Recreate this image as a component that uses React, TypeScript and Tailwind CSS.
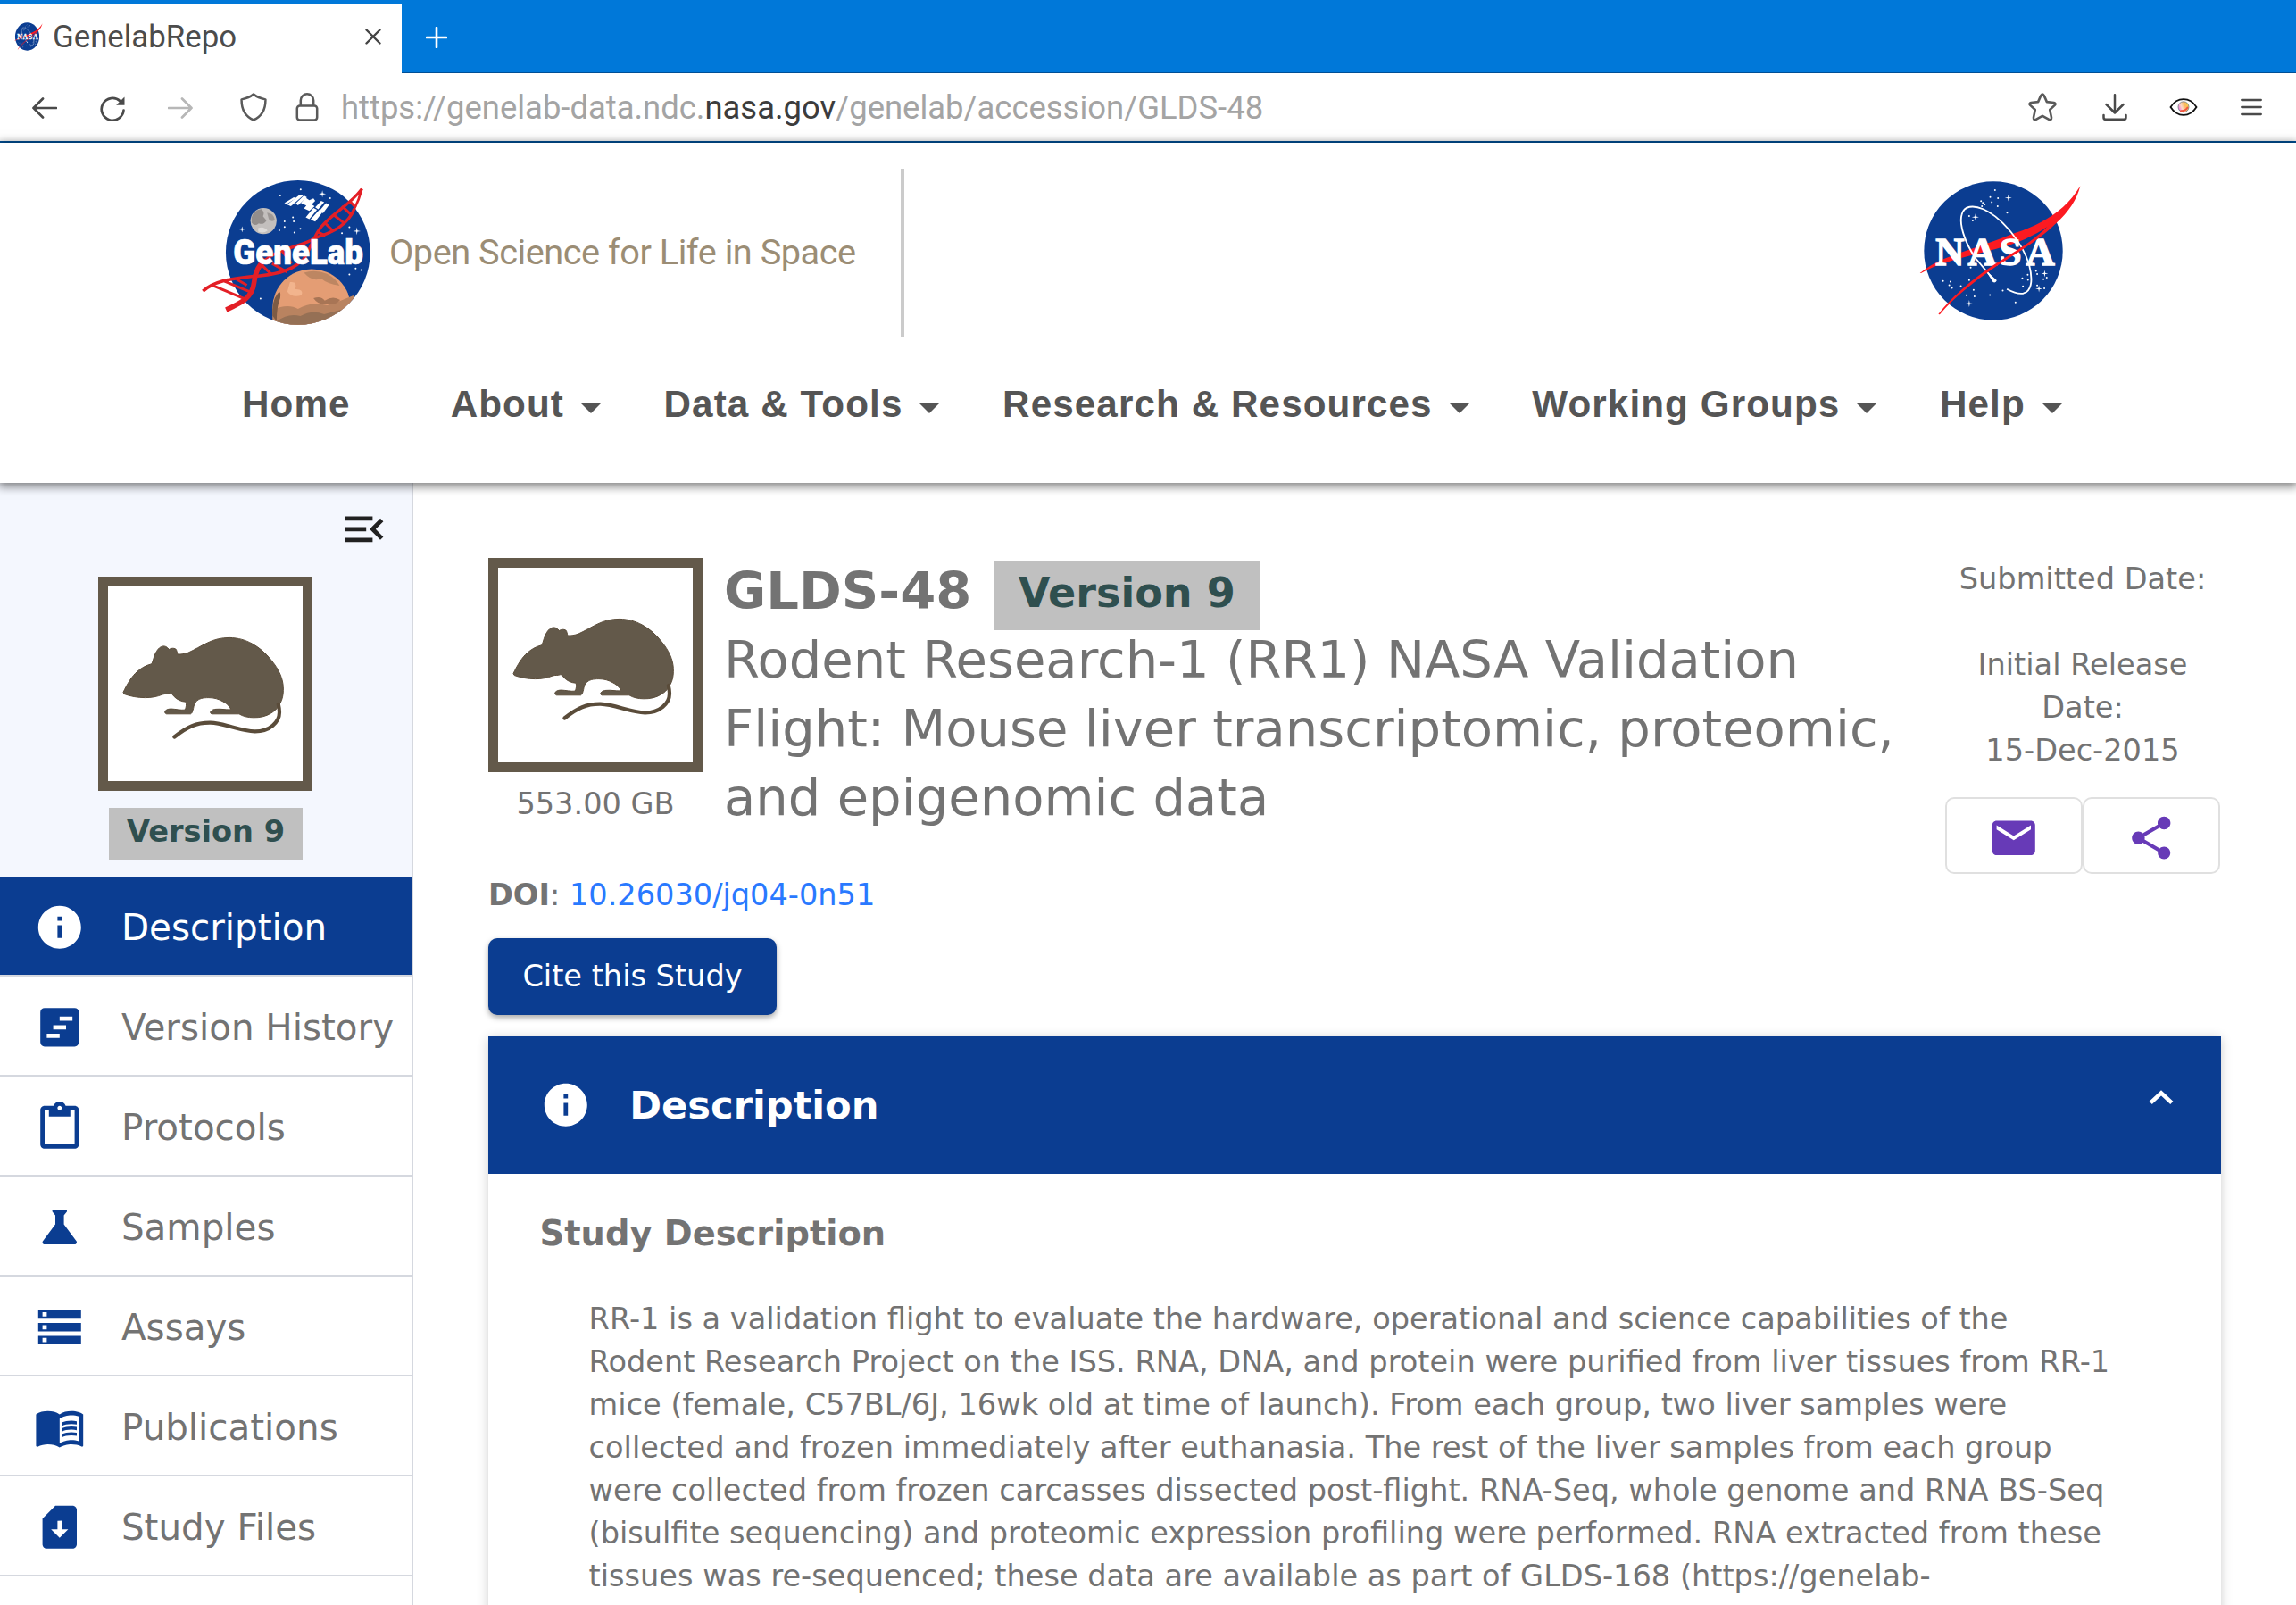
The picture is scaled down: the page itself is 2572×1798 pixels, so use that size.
import React from "react";
import {
  MdInfo,
  MdContentPaste,
  MdScience,
  MdStorage,
  MdMenuBook,
  MdSimCardDownload,
  MdEmail,
  MdShare,
  MdMenuOpen,
} from "react-icons/md";

function Star({ x, y, r = 12 }: { x: number; y: number; r?: number }) {
  return (
    <path
      d={`M${x - r} ${y}L${x - 2} ${y - 2}L${x} ${y - r}L${x + 2} ${y - 2}L${x + r} ${y}L${x + 2} ${y + 2}L${x} ${y + r}L${x - 2} ${y + 2}Z`}
      fill="#fff"
    />
  );
}

const nasaDots = [
  [405, 458], [389, 481], [415, 485], [394, 499], [414, 512], [446, 534], [358, 495], [364, 501], [370, 506], [361, 512],
  [318, 545], [330, 560], [323, 719], [230, 764], [255, 766], [251, 778], [260, 787], [290, 781], [318, 761], [333, 794],
  [309, 812], [336, 816], [388, 811], [431, 796], [474, 836], [497, 755], [515, 743], [516, 760], [499, 782], [543, 730],
  [547, 741], [568, 758], [579, 753], [547, 779], [571, 789],
];

function NasaLogo({ className }: { className: string }) {
  return (
    <svg viewBox="150 425 550 475" preserveAspectRatio="none" className={className}>
      <circle cx="399.5" cy="662.5" r="233.5" fill="#0b3d91" />
      {nasaDots.map(([x, y]) => (
        <circle key={`${x}-${y}`} cx={x} cy={y} r="3" fill="#fff" />
      ))}
      <Star x={450} y={484} />
      <Star x={339} y={549} />
      <Star x={318} y={840} />
      <Star x={572} y={739} />
      <Star x={553} y={790} />
      <path
        d="M692 444C642 528 562 574 465 605C400 632 305 662 235 689Q190 707 152 738L156 738Q195 714 240 702C330 674 430 654 485 632C520 617 550 602 575 585L610 570C655 530 680 490 692 444Z"
        fill="#fc1a21"
      />
      <path
        d="M405 765L340 688C300 630 284 570 293 540C301 510 332 508 365 522C430 550 500 640 520 710C535 768 525 800 500 806C483 809 465 802 445 791"
        fill="none"
        stroke="#fff"
        strokeWidth="5.5"
      />
      <path d="M374 729L398 768Q408 772 411 762Z" fill="#fff" />
      <text
        x="205 314 420 509"
        y="711"
        fontFamily="'Liberation Serif', serif"
        fontWeight="700"
        fontSize="134"
        fill="#fff"
        stroke="#fff"
        strokeWidth="4.5"
      >
        NASA
      </text>
      <path
        d="M584 578C545 618 500 648 440 685C350 738 260 815 214 876L219 877C270 815 360 745 445 692C520 645 575 606 612 568Z"
        fill="#fc1a21"
      />
    </svg>
  );
}

const genelabDots = [
  [312, 116], [381, 96], [480, 125], [327, 203], [355, 190], [358, 203], [327, 222], [309, 233], [380, 228], [360, 241],
  [520, 243], [545, 223], [246, 463], [545, 382], [566, 362], [585, 367],
];

function GeneLabLogo() {
  return (
    <svg viewBox="45 60 580 500" className="mt-[11px] h-[167px] w-[193px] shrink-0 overflow-visible">
      <defs>
        <clipPath id="globe">
          <circle cx="372" cy="308" r="243" />
        </clipPath>
      </defs>
      <circle cx="372" cy="308" r="243" fill="#0b3d91" />
      {genelabDots.map(([x, y]) => (
        <circle key={`${x}-${y}`} cx={x} cy={y} r="3" fill="#fff" />
      ))}
      <Star x={454} y={111} />
      <Star x={184} y={230} r={10} />
      <Star x={570} y={236} r={13} />
      <circle cx="256" cy="202" r="44" fill="#c3bfbd" />
      <path d="M216 190Q222 166 248 162Q262 172 254 186L266 200Q256 216 240 210Q226 222 216 208Z" fill="#938e8c" />
      <path d="M268 174Q290 176 294 198Q284 208 274 196Z" fill="#9d9896" />
      <path d="M238 226Q256 218 270 234Q256 246 238 238Z" fill="#dedbd9" />
      {/* space station: two pairs of solar arrays joined by the truss */}
      <g fill="#fff">
        <path d="M326 142L358 122L366 125L334 145Z" />
        <path d="M336 147L378 113L389 117L348 152Z" />
        <path d="M364 143L392 116L402 122L372 149Z" />
        <path d="M382 142L398 124L410 132L424 126L430 134L418 146L428 152L410 168L392 160L400 150Z" />
        <path d="M398 190L424 158L436 164L410 196Z" />
        <path d="M414 197L444 164L456 170L430 204Z" />
        <path d="M430 156L450 134L460 139L440 163Z" />
        <path d="M446 166L466 142L477 148L456 176Z" />
      </g>
      <g clipPath="url(#globe)">
        <circle cx="418" cy="496" r="132" fill="#e49d74" />
        <path d="M286 500Q340 478 372 498Q420 470 470 486Q520 470 560 452V560H286Z" fill="#b98360" />
        <path d="M300 540Q340 510 380 522Q420 500 460 516L520 500V560H290Z" fill="#957055" />
        <path d="M392 376Q430 364 470 380Q500 396 512 420Q470 414 450 396Q420 408 392 376Z" fill="#bd8662" />
        <path d="M345 408Q372 404 362 432Q392 430 384 452Q352 462 336 440Z" fill="#f2b48d" />
        <path d="M424 462Q450 452 462 470Q490 452 514 468Q500 486 470 482Q440 486 424 462Z" fill="#a87555" />
        <path d="M302 448Q316 430 312 462Q300 490 300 540L286 520Q284 470 302 448Z" fill="#7d5b44" />
      </g>
      <g fill="none" stroke="#e31f26">
        <path d="M52 438C90 405 140 397 215 389C290 384 345 372 380 340" strokeWidth="11" />
        <path d="M130 501C180 478 218 462 224 410C228 370 242 348 262 332" strokeWidth="17" />
        <path d="M250 345C300 290 390 290 432 258C490 240 540 215 562 160" strokeWidth="10" />
        <path d="M380 345C412 310 418 262 450 222C492 172 545 150 587 94" strokeWidth="10" />
        <path d="M587 94Q578 130 560 165" strokeWidth="8" />
        <path
          d="M82 418L190 463M125 405L212 441M165 398L200 418M250 350L285 384M285 345L335 374M320 305L350 345M440 240L464 252M462 208L492 238M490 180L526 208M520 152L552 182M545 134L566 156"
          strokeWidth="9"
        />
      </g>
      <text
        x="154"
        y="349"
        fontFamily="Roboto, sans-serif"
        fontWeight="900"
        fontSize="119"
        textLength="438"
        lengthAdjust="spacingAndGlyphs"
        fill="#fff"
        stroke="#fff"
        strokeWidth="2"
      >
        GeneLab
      </text>
    </svg>
  );
}

function Mouse() {
  return (
    <svg viewBox="0 0 240 240" className="size-[240px] shrink-0">
      <rect x="5.5" y="5.5" width="229" height="229" fill="#fff" stroke="#63594a" strokeWidth="11" />
      <path
        d="M28 129.7C32 121 38 111 43.6 106.5C48 102.5 53 99.5 60 97.7C62 93 62.5 88 65.5 83.5C69 77.5 75 75.5 79.3 81.5C82 80 84.5 79.8 86.8 81C88.2 82.5 88.2 84.5 88.9 87C93 87.2 97 86.5 100.7 85.2C108 82 115 77.5 122.5 74C130 70.3 138 68.4 147 68.4C157 68.6 165 71 172.5 75.1C181 79.8 188 86 193.6 93.2C200 101 204 108 206 115.5C207.5 121 207.6 126 207.1 131.3C206.6 136 205 140.5 202.5 144.3C200 148.5 197 151 193.6 153C188 156.5 181 158 173.9 157.8C168 157.8 162 156.5 157.9 153.8L127.1 153.8C125.5 153 125.2 152 126.2 150.8C127.5 149.2 129.5 148.5 132 148.4C138 147.8 142 149.2 147.9 148.9C149.5 147.5 144 142 140 140C135 137 129.5 135.6 123.9 135.6C117 135.6 113 136.5 109.6 140C106.5 143.5 107.2 147 106 149.8C105.5 152 105 153 103.5 153.8L76.5 153.8C74.5 153 74.2 151.5 75.2 150.3C77 148.5 79 148.1 82 148.1C87 148.3 92 149.7 97 149.2C98.8 147 98.8 142.5 98.2 140.2C93 140 88 137.5 85.2 134.5C83 132 82 130.5 80.4 130.8C77.5 132 75 131 72.1 132C66 134.5 60 135.6 52.5 135.6C44 135.6 36 134 29.3 131.6Z"
        fill="#63594a"
        stroke="#5a4c3a"
        strokeWidth="1"
      />
      <path
        d="M85.4 179.5C100 168 110 163.5 125.7 163.7C142 164.2 158 172.5 175.7 173.4C192 173.4 203 163 203 152Q203 148 201.8 143"
        fill="none"
        stroke="#5a4c3a"
        strokeWidth="4.2"
        strokeLinecap="round"
      />
    </svg>
  );
}

function VersionHistoryIcon({ className }: { className?: string }) {
  return (
    <svg viewBox="0 0 24 24" className={className} fill="currentColor">
      <path
        fillRule="evenodd"
        d="M5 3h14a2 2 0 0 1 2 2v14a2 2 0 0 1-2 2H5a2 2 0 0 1-2-2V5a2 2 0 0 1 2-2zM12 7h6v2h-6zM9 11h6v2H9zM6 15h6v2H6z"
      />
    </svg>
  );
}

function TabStrip() {
  return (
    <div className="flex h-[82px] border-b border-[#004f96] bg-[#0078d9]">
      <div className="mt-1 -mb-px flex w-[450px] items-center bg-white pb-1">
        <NasaLogo className="ml-4 size-8" />
        <span className="ml-[11px] text-[34.8px] leading-none text-[#4c4c4c]">GenelabRepo</span>
        <svg viewBox="0 0 18 18" className="mr-[23px] ml-auto size-[18px]" stroke="#444" strokeWidth="2.4" strokeLinecap="round">
          <path d="M1.5 1.5l15 15M16.5 1.5l-15 15" />
        </svg>
      </div>
      <svg viewBox="0 0 24 24" className="mt-[30px] ml-[27px] size-6" stroke="#fff" strokeWidth="2.6" strokeLinecap="round">
        <path d="M12 1v22M1 12h22" />
      </svg>
    </div>
  );
}

function Toolbar() {
  return (
    <div className="flex h-[78px] items-center border-b-2 border-[#00529a] bg-white pr-[38px] pl-9 text-[#4a4a4a]">
      <svg viewBox="0 0 28 24" className="mt-px h-6 w-7" fill="none" stroke="currentColor" strokeWidth="2.7" strokeLinecap="round" strokeLinejoin="round">
        <path d="M12 1.5L1.5 12L12 22.5M1.5 12H27" />
      </svg>
      <svg viewBox="0 0 28 28" className="mt-[3px] ml-12 size-7" fill="none" stroke="currentColor" strokeWidth="2.7" strokeLinecap="round">
        <path d="M26.5 15.5A12.4 12.4 0 1 1 22.5 5.2" />
        <path d="M27.5 .5V9.8H18.2Z" fill="currentColor" stroke="none" />
      </svg>
      <svg viewBox="0 0 28 24" className="mt-px ml-12 h-6 w-7 text-[#b7b7b7]" fill="none" stroke="currentColor" strokeWidth="2.7" strokeLinecap="round" strokeLinejoin="round">
        <path d="M16 1.5L26.5 12L16 22.5M26.5 12H1" />
      </svg>
      <svg viewBox="0 0 30 32" className="ml-[53px] h-8 w-[30px]" fill="none" stroke="#5a5a5a" strokeWidth="2.5" strokeLinejoin="round">
        <path d="M15 1.5C11 5 6 6.5 1.6 7.4C1.4 17 5 26 15 30.5C25 26 28.6 17 28.4 7.4C24 6.5 19 5 15 1.5Z" />
      </svg>
      <svg viewBox="0 0 26 32" className="ml-8 h-8 w-[26px]" fill="none" stroke="#5a5a5a" strokeWidth="2.5">
        <rect x="1.8" y="14.5" width="22.4" height="16" rx="3" />
        <path d="M5.8 14.5V8.5a7.2 7.2 0 0 1 14.4 0V14.5" />
      </svg>
      <span className="mt-[2px] ml-[25px] text-[36.43px] leading-none whitespace-nowrap text-[#a4a4a4]">
        https://genelab-data.ndc.<span className="text-[#3c3c3c]">nasa.gov</span>/genelab/accession/GLDS-48
      </span>
      <svg viewBox="0 0 32 32" className="ml-auto size-8" fill="none" stroke="#5a5a5a" strokeWidth="2.6" strokeLinejoin="round">
        <path d="M14.3 2.9Q16 .4 17.7 2.9L20.9 10.1L28.8 11Q31.6 11.8 29.7 13.9L24.2 19L26 27.6Q26.2 31 23.3 29.9L16 25.8L8.7 29.9Q5.8 31 6 27.6L7.8 19L2.3 13.9Q.4 11.8 3.2 11L11.1 10.1Z" />
      </svg>
      <svg viewBox="0 0 28 30" className="ml-[51px] h-[30px] w-7" fill="none" stroke="currentColor" strokeWidth="2.5" strokeLinecap="round" strokeLinejoin="round">
        <path d="M14 1.2V21M4.5 12L14 21.5L23.5 12M1.5 24v2.5q0 2.3 2.3 2.3h20.4q2.3 0 2.3-2.3V24" />
      </svg>
      <svg viewBox="0 0 32 20" className="ml-[47px] h-5 w-8" fill="none">
        <defs>
          <linearGradient id="iris" x1="0" y1=".7" x2="1" y2=".3">
            <stop offset="0" stopColor="#f06be0" />
            <stop offset=".35" stopColor="#fbd9c4" />
            <stop offset=".65" stopColor="#fbb765" />
            <stop offset="1" stopColor="#f9d23c" />
          </linearGradient>
        </defs>
        <path d="M1.5 10C9 -1.8 23 -1.8 30.5 10C23 21.8 9 21.8 1.5 10Z" stroke="#111" strokeWidth="1.8" />
        <circle cx="16" cy="9.8" r="6" fill="url(#iris)" stroke="#6f7a80" strokeWidth=".8" />
        <path d="M13 14.2Q18 14.5 20.5 10.5" stroke="#f0553f" strokeWidth="2" strokeLinecap="round" />
      </svg>
      <svg viewBox="0 0 24 20" className="ml-[48px] h-5 w-6" stroke="currentColor" strokeWidth="2.3" strokeLinecap="round">
        <path d="M1.2 2h21.6M1.2 10h21.6M1.2 18h21.6" />
      </svg>
    </div>
  );
}

const menus = ["About", "Data & Tools", "Research & Resources", "Working Groups", "Help"];

function SiteHeader() {
  return (
    <header className="relative h-[381px] shrink-0 bg-white pt-[29px] shadow-[0_2px_10px_2px_rgba(0,0,0,0.5)]">
      <div className="flex h-[188px] items-start pr-[239px] pl-[225px]">
        <GeneLabLogo />
        <span className="mt-[69px] ml-[18px] text-[39.7px] leading-[50px] tracking-[-0.47px] whitespace-nowrap text-[#9b8d75]">
          Open Science for Life in Space
        </span>
        <div className="ml-[50px] h-[188px] w-1 bg-[#cbcbcb]" />
        <NasaLogo className="mt-[13px] ml-auto h-[158px] w-[183px]" />
      </div>
      <nav className="mt-[50px] flex items-center pl-[271px] font-['Liberation_Sans',sans-serif] text-[42.2px] leading-[52px] font-bold tracking-[1.1px] whitespace-nowrap text-[#555]">
        <a className="mr-[112px]">Home</a>
        {menus.map((m) => (
          <a key={m} className="mr-[69.6px] flex items-center">
            {m}
            <svg viewBox="0 0 24 12" className="mt-2 ml-[18px] h-3 w-6" fill="currentColor">
              <path d="M0 0H24L12 12Z" />
            </svg>
          </a>
        ))}
      </nav>
    </header>
  );
}

const navRows = [
  { label: "Description", Icon: MdInfo, active: true },
  { label: "Version History", Icon: VersionHistoryIcon },
  { label: "Protocols", Icon: MdContentPaste },
  { label: "Samples", Icon: MdScience },
  { label: "Assays", Icon: MdStorage },
  { label: "Publications", Icon: MdMenuBook },
  { label: "Study Files", Icon: MdSimCardDownload },
];

function Sidebar() {
  return (
    <aside className="flex w-[463px] shrink-0 flex-col border-r-2 border-[#d5d8df] bg-white">
      <div className="flex h-[441px] flex-col items-center bg-[#f4f7fe]">
        <MdMenuOpen className="mt-[23px] mr-[24px] size-[57.6px] self-end text-[#212121]" />
        <div className="mt-[24.4px] mr-px">
          <Mouse />
        </div>
        <div className="mt-[19px] h-[58px] w-[217px] bg-[#c0c0c0] text-center text-[33.6px] leading-[54px] font-bold text-[#2f4f4f]">
          Version 9
        </div>
      </div>
      {navRows.map(({ label, Icon, active }) => (
        <div
          key={label}
          className={
            active
              ? "flex h-[112px] shrink-0 items-center border-b-2 border-[#d5d8df] bg-[#0b3d91] bg-clip-padding pt-1 pl-[38.4px] text-white"
              : "flex h-[112px] shrink-0 items-center border-b-2 border-[#d5d8df] pt-1 pl-[38.4px] text-[#737373]"
          }
        >
          <Icon className={active ? "size-[57.6px] shrink-0" : "size-[57.6px] shrink-0 text-[#0b3d91]"} />
          <span className="ml-10 text-[40.4px] leading-[48px] whitespace-nowrap">{label}</span>
        </div>
      ))}
    </aside>
  );
}

const bodyLines = [
  "RR-1 is a validation flight to evaluate the hardware, operational and science capabilities of the",
  "Rodent Research Project on the ISS. RNA, DNA, and protein were purified from liver tissues from RR-1",
  "mice (female, C57BL/6J, 16wk old at time of launch). From each group, two liver samples were",
  "collected and frozen immediately after euthanasia. The rest of the liver samples from each group",
  "were collected from frozen carcasses dissected post-flight. RNA-Seq, whole genome and RNA BS-Seq",
  "(bisulfite sequencing) and proteomic expression profiling were performed. RNA extracted from these",
  "tissues was re-sequenced; these data are available as part of GLDS-168 (https://genelab-",
];

const titleLines = [
  "Rodent Research-1 (RR1) NASA Validation",
  "Flight: Mouse liver transcriptomic, proteomic,",
  "and epigenomic data",
];

function StudyMain() {
  return (
    <main className="flex min-w-0 flex-1 flex-col pr-[84px] pl-[84px] text-[33.6px] leading-[48px] text-[#737373]">
      <div className="flex h-[432px] shrink-0 items-start pt-[84px]">
        <div className="flex w-[240px] flex-col items-center">
          <Mouse />
          <span className="mt-[12px] whitespace-nowrap">553.00 GB</span>
        </div>
        <div className="-mt-px ml-6 text-[57.6px] leading-[77px] whitespace-nowrap">
          <div className="flex h-[77px]">
            <span className="font-bold">GLDS-48</span>
            <span className="mt-1 ml-[25px] h-[78px] w-[298px] bg-[#c0c0c0] text-center text-[46.08px] leading-[73px] font-bold text-[#2f4f4f]">
              Version 9
            </span>
          </div>
          {titleLines.map((t) => (
            <div key={t}>{t}</div>
          ))}
        </div>
        <div className="mr-px ml-auto w-[308px] text-center">
          <div className="h-24 whitespace-nowrap">Submitted Date:</div>
          <div>Initial Release</div>
          <div>Date:</div>
          <div>15-Dec-2015</div>
          <div className="mt-[28px] flex text-[#673ab7]">
            <div className="flex h-[86px] flex-1 items-center justify-center rounded-[10px] border-2 border-[#e0e0e0] pt-[6px]">
              <MdEmail className="size-[57.6px]" />
            </div>
            <div className="flex h-[86px] flex-1 items-center justify-center rounded-[10px] border-2 border-[#e0e0e0] pt-[6px]">
              <MdShare className="size-[57.6px]" />
            </div>
          </div>
        </div>
      </div>
      <div className="mt-[6px]">
        <b>DOI</b>: <a className="text-[#2979ff]">10.26030/jq04-0n51</a>
      </div>
      <button className="mt-[24px] h-[86px] w-[323px] shrink-0 rounded-[10px] bg-[#0b3d91] text-white shadow-[0_3px_6px_rgba(0,0,0,0.35)]">
        Cite this Study
      </button>
      <section className="mt-[24px] h-[800px] shrink-0 bg-white shadow-[0_2px_12px_rgba(0,0,0,0.2)]">
        <div className="flex h-[154px] items-center bg-[#0b3d91] pr-[53px] pl-[57.6px] text-white">
          <MdInfo className="size-[57.6px]" />
          <span className="ml-[43px] text-[43.2px] leading-[50px] font-bold">Description</span>
          <svg viewBox="0 0 28 17" className="mb-[17px] ml-auto h-[17px] w-7" fill="none" stroke="currentColor" strokeWidth="4.6">
            <path d="M2.2 14.4L14 3.4L25.8 14.4" />
          </svg>
        </div>
        <div className="px-[57.6px] pt-[43px]">
          <h2 className="text-[38.4px] leading-[48px] font-bold">Study Description</h2>
          <div className="mt-[48px] pl-[55px] whitespace-nowrap">
            {bodyLines.map((l) => (
              <div key={l}>{l}</div>
            ))}
          </div>
        </div>
      </section>
    </main>
  );
}

export default function App() {
  return (
    <div className="flex h-[1798px] w-[2572px] flex-col overflow-hidden bg-white font-[Roboto,sans-serif]">
      <TabStrip />
      <Toolbar />
      <SiteHeader />
      <div className="flex min-h-0 flex-1 overflow-hidden font-['DejaVu_Sans',sans-serif]">
        <Sidebar />
        <StudyMain />
      </div>
    </div>
  );
}
